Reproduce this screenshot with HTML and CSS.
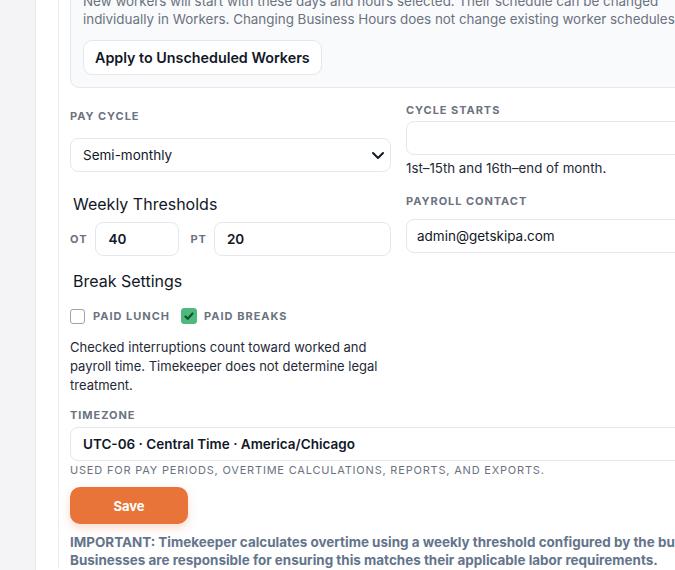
FILE: index.html
```html
<!DOCTYPE html>
<html lang="en">
<head>
  <meta charset="UTF-8"/>
  <meta name="viewport" content="width=device-width,initial-scale=1"/>
  <title>Business Settings</title>
  <link rel="stylesheet" href="styles.css">
</head>
<body>
  <aside class="rail"></aside>

  <main class="main">
    <section class="panel">

      <!-- business hours note -->
      <div class="note-card">
        <p class="note-text">New workers will start with these days and hours selected. Their schedule can be changed individually in Workers. Changing Business Hours does not change existing worker schedules.</p>
        <button class="btn-outline">Apply to Unscheduled Workers</button>
      </div>

      <div class="form-grid">
        <!-- left column -->
        <div class="col col-left">
          <label class="field-label label-pay">Pay Cycle</label>
          <div class="select select-pay">
            <span>Semi-monthly</span>
            <svg class="chevron" width="16" height="16" viewBox="0 0 16 16" fill="none" stroke="#111827" stroke-width="2" stroke-linecap="round" stroke-linejoin="round"><path d="M3 6l5 5 5-5"/></svg>
          </div>

          <h3 class="group-title title-weekly">Weekly Thresholds</h3>
          <div class="threshold-row">
            <span class="mini-label">OT</span>
            <div class="input input-ot">40</div>
            <span class="mini-label pt">PT</span>
            <div class="input input-pt">20</div>
          </div>

          <h3 class="group-title title-break">Break Settings</h3>
          <div class="check-row">
            <span class="check"></span>
            <span class="mini-label">Paid Lunch</span>
            <span class="check checked">
              <svg width="12" height="12" viewBox="0 0 12 12" fill="none" stroke="#14532d" stroke-width="2.2" stroke-linecap="round" stroke-linejoin="round"><path d="M2.5 6.5l2.3 2.3L9.5 3.5"/></svg>
            </span>
            <span class="mini-label">Paid Breaks</span>
          </div>
          <p class="break-help">Checked interruptions count toward worked and payroll time. Timekeeper does not determine legal treatment.</p>
        </div>

        <!-- right column -->
        <div class="col col-right">
          <label class="field-label">Cycle Starts</label>
          <div class="input input-cycle"></div>
          <p class="cycle-help">1st–15th and 16th–end of month.</p>

          <label class="field-label label-contact">Payroll Contact</label>
          <div class="input input-contact">admin@getskipa.com</div>
        </div>
      </div>

      <label class="field-label label-tz">Timezone</label>
      <div class="select select-tz">
        <span>UTC-06 · Central Time · America/Chicago</span>
      </div>
      <p class="tz-help">Used for pay periods, overtime calculations, reports, and exports.</p>

      <button class="btn-save">Save</button>

      <p class="important">IMPORTANT: Timekeeper calculates overtime using a weekly threshold configured by the business. Businesses are responsible for ensuring this matches their applicable labor requirements.</p>
    </section>
  </main>
</body>
</html>
```

FILE: styles.css
```css
body {
  margin: 0;
  height: 570px;
  overflow: hidden;
  display: flex;
  background: #fff;
  color: #1f2937;
  font-family: Inter, "Noto Sans", sans-serif;
}
/* LEFT RAIL */
.rail {
  flex: 0 0 35px;
  background: #f4f4f6;
  border-right: 1px solid #e5e7eb;
}
.main {
  flex: 1;
  padding-left: 22px;
}
.panel {
  width: 657px;
  margin-top: -21px;
  padding-left: 11px;
  border-left: 1px solid #ededf0;
  display: flex;
  flex-direction: column;
  align-items: flex-start;
}
/* NOTE CARD */
.note-card {
  box-sizing: border-box;
  width: 657px;
  padding: 12px 12px 12px;
  background: #f9fafb;
  border: 1px solid #e5e7eb;
  border-radius: 9px;
}
.note-text {
  margin: 0;
  font-size: 13.4px;
  line-height: 18px;
  color: #6b7280;
}
.btn-outline {
  margin-top: 12px;
  height: 35px;
  padding: 0 11px;
  background: #fff;
  border: 1px solid #e5e7eb;
  border-radius: 9px;
  font-family: inherit;
  font-size: 14.3px;
  font-weight: 600;
  color: #111827;
}
/* FORM GRID */
.form-grid {
  width: 657px;
  margin-top: 15px;
  display: grid;
  grid-template-columns: 321px 321px;
  column-gap: 15px;
}
.col {
  display: flex;
  flex-direction: column;
}
.col-left {
  padding-top: 6px;
}
.field-label {
  display: block;
  font-size: 11px;
  line-height: 14px;
  font-weight: 700;
  letter-spacing: 0.95px;
  text-transform: uppercase;
  color: #6b7280;
}
.input, .select {
  box-sizing: border-box;
  height: 34px;
  display: flex;
  align-items: center;
  padding: 0 12px;
  background: #fff;
  border: 1px solid #e5e7eb;
  border-radius: 8px;
  font-size: 13.5px;
  color: #111827;
}
.select-pay {
  margin-top: 15px;
  justify-content: space-between;
  padding-right: 4px;
}
.group-title {
  margin: 22px 0 0 3px;
  font-size: 16px;
  line-height: 20px;
  font-weight: 400;
  color: #111827;
}
.threshold-row {
  margin-top: 8px;
  display: flex;
  align-items: center;
}
.mini-label {
  font-size: 11px;
  font-weight: 700;
  letter-spacing: 1px;
  text-transform: uppercase;
  color: #6b7280;
}
.input-ot {
  width: 84px;
  margin-left: 8px;
  font-weight: 600;
}
.mini-label.pt {
  margin-left: 11px;
}
.input-pt {
  flex: 1;
  margin-left: 7px;
  font-weight: 600;
}
.title-break {
  margin-top: 15px;
}
/* CHECKBOXES */
.check-row {
  margin-top: 16px;
  height: 18px;
  display: flex;
  align-items: center;
}
.check {
  box-sizing: border-box;
  width: 15px;
  height: 15px;
  margin-right: 8px;
  border: 1.5px solid #9ca3af;
  border-radius: 3px;
  background: #fff;
}
.check-row .mini-label {
  margin-right: 11px;
}
.check.checked {
  width: 16px;
  height: 16px;
  display: flex;
  align-items: center;
  justify-content: center;
  margin-right: 7px;
  background: #4fb87c;
  border-color: #4fb87c;
}
.break-help {
  margin: 13px 0 0;
  font-size: 13px;
  line-height: 19px;
  color: #1f2937;
}
/* RIGHT COLUMN */
.input-cycle {
  margin-top: 4px;
}
.cycle-help {
  margin: 4px 0 0;
  font-size: 13.3px;
  line-height: 18px;
  color: #1f2937;
}
.label-contact {
  margin-top: 17px;
}
.input-contact {
  margin-top: 11px;
  padding-left: 10px;
}
/* TIMEZONE */
.label-tz {
  margin-top: 13px;
}
.select-tz {
  width: 657px;
  margin-top: 5px;
  font-weight: 600;
}
.tz-help {
  margin: 2px 0 0;
  font-size: 11px;
  line-height: 14px;
  letter-spacing: 0.8px;
  text-transform: uppercase;
  color: #6b7280;
}
/* SAVE */
.btn-save {
  margin-top: 10px;
  width: 118px;
  height: 37px;
  border: none;
  border-radius: 10px;
  background: #e8743a;
  color: #fff;
  font-family: inherit;
  font-size: 13px;
  font-weight: 700;
  box-shadow: 0 4px 10px rgba(232,116,58,0.25);
}
.important {
  margin: 9px 0 0;
  font-size: 13.45px;
  line-height: 18px;
  font-weight: 700;
  color: #64748b;
}
```
